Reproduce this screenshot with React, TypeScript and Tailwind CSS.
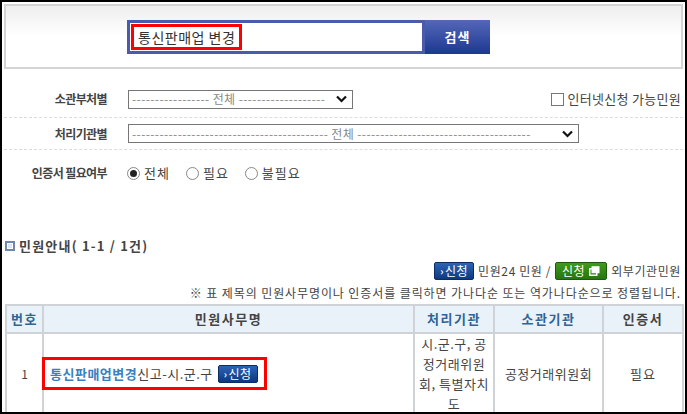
import React from "react";

const FONT = { fontFamily: '"Noto Sans CJK KR", "Noto Sans", sans-serif' };

const dashes = (n: number) => "-".repeat(n);

function Chevron() {
  return (
    <svg width="11" height="8" viewBox="0 0 11 8" className="shrink-0">
      <path d="M1 1.5 L5.5 6 L10 1.5" fill="none" stroke="#111" strokeWidth="2.2" />
    </svg>
  );
}

function FakeSelect({ text, width }: { text: string; width: string }) {
  return (
    <div className={`flex h-[19px] ${width} items-center justify-between border border-[#767676] bg-white pl-[3px] pr-[5px]`}>
      <span className="whitespace-nowrap text-[12px] leading-none tracking-[0.4px] text-[#888]">{text}</span>
      <Chevron />
    </div>
  );
}

function Radio({ checked, label }: { checked?: boolean; label: string }) {
  return (
    <label className="flex items-center gap-[4px]">
      <span className="flex h-[13px] w-[13px] items-center justify-center rounded-full border border-[#888] bg-white">
        {checked && <span className="h-[7px] w-[7px] rounded-full bg-[#222]" />}
      </span>
      <span className="text-[13px] tracking-[1px] text-[#444]">{label}</span>
    </label>
  );
}

function ApplyBlue({ className = "" }: { className?: string }) {
  return (
    <span
      className={`inline-flex h-[18px] items-center rounded-[2px] border border-[#0b2c66] bg-gradient-to-b from-[#2d63b5] to-[#0c3a80] px-[5px] text-[12px] leading-none tracking-[0.5px] text-white ${className}`}
    >
      <span className="mr-[1px] text-[10px] font-bold">›</span>신청
    </span>
  );
}

function ApplyGreen() {
  return (
    <span className="inline-flex h-[18px] items-center gap-[4px] rounded-[2px] border border-[#1f5a0a] bg-gradient-to-b from-[#3f9a1e] to-[#26760d] px-[6px] text-[12px] leading-none tracking-[0.5px] text-white">
      신청
      <svg width="11" height="10" viewBox="0 0 11 10">
        <rect x="0.75" y="2.75" width="7" height="6.5" fill="none" stroke="#fff" strokeWidth="1.5" />
        <rect x="3" y="0.75" width="7" height="6" fill="#fff" stroke="#fff" strokeWidth="1" />
      </svg>
    </span>
  );
}

export default function App() {
  return (
    <div style={FONT} className="h-[414px] w-[687px] overflow-hidden border-2 border-black bg-white p-[2px]">
      {/* search box */}
      <div className="h-[65px] border-2 border-[#d4d4d4] bg-gradient-to-b from-[#eeeeee] via-white to-white pl-[121px] pt-[14px]">
        <div className="flex h-[34px]">
          <div className="flex w-[298px] items-center border-[3px] border-[#4a5bab] bg-white pl-[1px]">
            <span className="border-[3px] border-[#ff0000] px-[4px] py-[1px] text-[14px] leading-[18px] tracking-[0.5px] text-[#333]">
              통신판매업 변경
            </span>
          </div>
          <button className="w-[65px] bg-gradient-to-b from-[#5467b8] to-[#1d3890] text-[13px] font-bold tracking-[1px] text-white">
            검색
          </button>
        </div>
      </div>

      {/* filters */}
      <div className="mt-[12px]">
        <div className="flex h-[37px] items-center border-b border-dashed border-[#dcdcdc]">
          <div className="w-[104px] pr-[1px] text-right text-[12px] font-bold tracking-[-0.6px] text-[#444]">소관부처별</div>
          <div className="ml-[20px]">
            <FakeSelect width="w-[225px]" text={`${dashes(17)} 전체 ${dashes(19)}`} />
          </div>
          <label className="ml-auto mr-[2px] flex items-center gap-[3px]">
            <span className="h-[13px] w-[13px] border border-[#777] bg-white" />
            <span className="text-[13px] tracking-[0.3px] text-[#444]">인터넷신청 가능민원</span>
          </label>
        </div>
        <div className="flex h-[32px] items-center border-b border-dashed border-[#dcdcdc]">
          <div className="w-[104px] pr-[1px] text-right text-[12px] font-bold tracking-[-0.6px] text-[#444]">처리기관별</div>
          <div className="ml-[20px]">
            <FakeSelect width="w-[451px]" text={`${dashes(43)} 전체 ${dashes(38)}`} />
          </div>
        </div>
        <div className="flex h-[46px] items-center">
          <div className="w-[104px] pr-[1px] text-right text-[12px] font-bold tracking-[-0.6px] text-[#444]">인증서 필요여부</div>
          <div className="ml-[19px] flex items-center gap-[16px]">
            <Radio checked label="전체" />
            <Radio label="필요" />
            <Radio label="불필요" />
          </div>
        </div>
      </div>

      {/* list header */}
      <div className="mt-[40px] flex items-center gap-[4px] pl-[1px]">
        <span className="flex h-[10px] w-[10px] items-center justify-center border-[2px] border-[#6d86b4] bg-white">
          <span className="h-[4px] w-[4px] bg-[#dfe6f3]" />
        </span>
        <span className="text-[13px] font-bold tracking-[1.2px] text-[#444]">민원안내( 1-1 / 1건)</span>
      </div>

      <div className="mt-[6px] flex items-center justify-end gap-[4px] pr-[2px] text-[12px] tracking-[0.6px] text-[#444]">
        <ApplyBlue />
        <span>민원24 민원 /</span>
        <ApplyGreen />
        <span>외부기관민원</span>
      </div>

      <div className="mt-[4px] pr-[2px] text-right text-[12px] tracking-[0.9px] text-[#444]">
        ※ 표 제목의 민원사무명이나 인증서를 클릭하면 가나다순 또는 역가나다순으로 정렬됩니다.
      </div>

      {/* table */}
      <table className="ml-[1px] mt-[2px] w-[679px] table-fixed border-collapse text-[12px]">
        <colgroup>
          <col className="w-[37px]" />
          <col className="w-[371px]" />
          <col className="w-[80px]" />
          <col className="w-[109px]" />
          <col />
        </colgroup>
        <thead>
          <tr className="h-[28px] bg-[#eaf2f9] text-[13px] font-bold tracking-[1.5px]">
            <th className="border-2 border-[#cfd3d8] text-[#2f6496]">번호</th>
            <th className="border-2 border-[#cfd3d8] text-[#444]">민원사무명</th>
            <th className="border-2 border-[#cfd3d8] text-[#2f6496]">처리기관</th>
            <th className="border-2 border-[#cfd3d8] text-[#2f6496]">소관기관</th>
            <th className="border-2 border-[#cfd3d8] text-[#444]">인증서</th>
          </tr>
        </thead>
        <tbody>
          <tr className="h-[80px] text-[#444]">
            <td className="border-2 border-[#cfd3d8] text-center">1</td>
            <td className="border-2 border-[#cfd3d8] pl-0">
              <span className="-ml-[2px] inline-flex items-center border-[3px] border-[#ff0000] py-[4px] pl-[5px] pr-[6px]">
                <span className="text-[13px] font-bold tracking-[0.5px] text-[#3a7fc0]">통신판매업변경</span>
                <span className="text-[13px] tracking-[0.5px] text-[#444]">신고-시.군.구</span>
                <ApplyBlue className="ml-[5px]" />
              </span>
            </td>
            <td className="border-2 border-[#cfd3d8] px-[4px] text-center text-[13px] leading-[20px] tracking-[0.5px]">
              시.군.구, 공<br />
              정거래위원<br />
              회, 특별자치<br />
              도
            </td>
            <td className="border-2 border-[#cfd3d8] text-center text-[13px] tracking-[0.5px]">공정거래위원회</td>
            <td className="border-2 border-[#cfd3d8] text-center text-[13px] tracking-[1px]">필요</td>
          </tr>
        </tbody>
      </table>
    </div>
  );
}
